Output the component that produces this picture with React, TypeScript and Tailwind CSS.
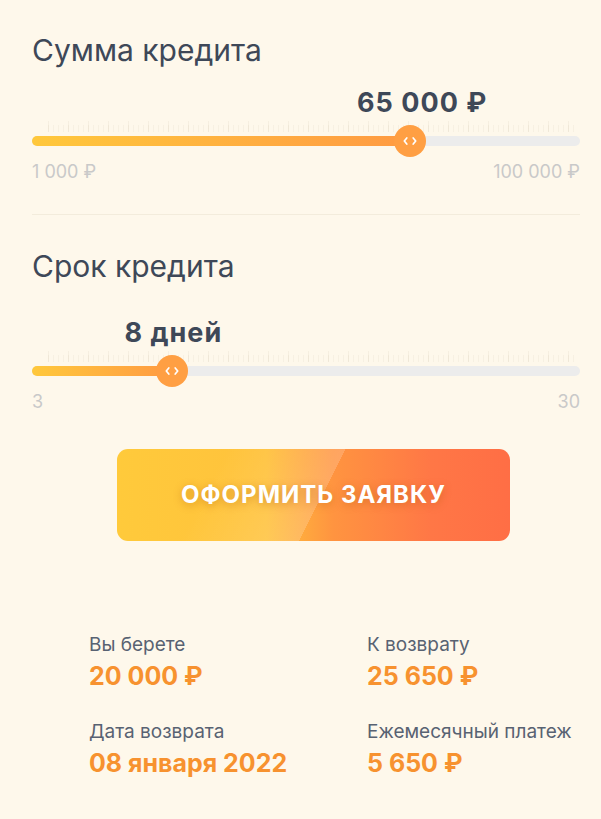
import React, { useState } from 'react'

type SliderProps = {
  title: string
  label: string
  percent: number
  labelPercent: number
  minLabel: string
  maxLabel: string
  valueGap: string
}

const Slider = ({ title, label, percent, labelPercent, minLabel, maxLabel, valueGap }: SliderProps) => {
  return (
    <div>
      <h2 className="text-[30px] leading-[36px] text-[#3e4858]">{title}</h2>
      <div className={`relative h-[30px] ${valueGap}`}>
        <div
          className="absolute top-0 -translate-x-1/2 whitespace-nowrap text-[27px] font-bold leading-[30px] tracking-[1px] text-[#3e4858]"
          style={{ left: `${labelPercent}%` }}
        >
          {label}
        </div>
      </div>
      <div className="relative h-[34px]">
        <div className="absolute left-[16px] right-[4px] top-[3px] h-[11px] bg-[repeating-linear-gradient(90deg,rgba(120,100,60,0.06)_0px,rgba(120,100,60,0.06)_1px,transparent_1px,transparent_20px)]" />
        <div className="absolute left-[16px] right-[4px] top-[7px] h-[7px] bg-[repeating-linear-gradient(90deg,rgba(120,100,60,0.05)_0px,rgba(120,100,60,0.05)_1px,transparent_1px,transparent_5px)]" />
        <div className="absolute left-0 right-0 top-[18px] h-[10px] rounded-full bg-[#ececec]" />
        <div
          className="absolute left-0 top-[18px] h-[10px] rounded-full bg-gradient-to-r from-[#ffc83b] to-[#ff9a42]"
          style={{ width: `${percent}%` }}
        />
        <div
          className="absolute top-[7px] flex h-[32px] w-[32px] -translate-x-1/2 items-center justify-center rounded-full bg-[#ff9f43]"
          style={{ left: `${percent}%` }}
        >
          <svg width="16" height="10" viewBox="0 0 16 10" fill="none">
            <path d="M4.8 2 L2.3 5 L4.8 8" stroke="white" strokeWidth="1.7" strokeLinecap="round" strokeLinejoin="round" />
            <path d="M11.2 2 L13.7 5 L11.2 8" stroke="white" strokeWidth="1.7" strokeLinecap="round" strokeLinejoin="round" />
          </svg>
        </div>
      </div>
      <div className="mt-[10px] flex justify-between text-[18px] leading-[20px] text-[#c9c9c9]">
        <span>{minLabel}</span>
        <span>{maxLabel}</span>
      </div>
    </div>
  )
}

const Info = ({ label, value }: { label: string; value: string }) => (
  <div>
    <div className="text-[19px] leading-[22px] text-[#586272]">{label}</div>
    <div className="mt-[6px] text-[25px] font-bold leading-[28px] text-[#f7922f]">{value}</div>
  </div>
)

export default function App() {
  const [amount] = useState(65000)
  const [days] = useState(8)

  return (
    <div
      className="min-h-screen w-full bg-[#fef8eb] pt-[32px] pr-[21px] pb-[40px] pl-[32px]"
      style={{ fontFamily: 'Inter, "Noto Sans", sans-serif' }}
    >
      <Slider
        title="Сумма кредита"
        label={`${amount.toLocaleString('ru-RU').replace(/\s/g, ' ')} ₽`}
        percent={69}
        labelPercent={71.2}
        minLabel="1 000 ₽"
        maxLabel="100 000 ₽"
        valueGap="mt-[20px]"
      />
      <div className="mt-[32px] h-px bg-[#f3ecdc]" />
      <div className="mt-[33px]">
        <Slider
          title="Срок кредита"
          label={`${days} дней`}
          percent={25.5}
          labelPercent={25.8}
          minLabel="3"
          maxLabel="30"
          valueGap="mt-[34px]"
        />
      </div>

      <div className="mt-[37px] flex">
        <button
          type="button"
          className="ml-[85px] flex h-[92px] w-[393px] items-center justify-center rounded-[11px] bg-[linear-gradient(117deg,rgba(255,255,255,0)_25%,rgba(255,255,255,0.18)_52%,rgba(255,255,255,0)_52%),linear-gradient(90deg,#ffca3b_0%,#ffc23c_38%,#ff9440_55%,#ff7746_80%,#ff6e45_100%)] text-[24px] font-bold tracking-[1px] text-white [text-shadow:0_2px_9px_rgba(170,85,0,0.4)]"
        >
          ОФОРМИТЬ ЗАЯВКУ
        </button>
      </div>

      <div className="mt-[93px] grid grid-cols-[278px_1fr] gap-y-[31px] pl-[57px]">
        <Info label="Вы берете" value="20 000 ₽" />
        <Info label="К возврату" value="25 650 ₽" />
        <Info label="Дата возврата" value="08 января 2022" />
        <Info label="Ежемесячный платеж" value="5 650 ₽" />
      </div>
    </div>
  )
}
